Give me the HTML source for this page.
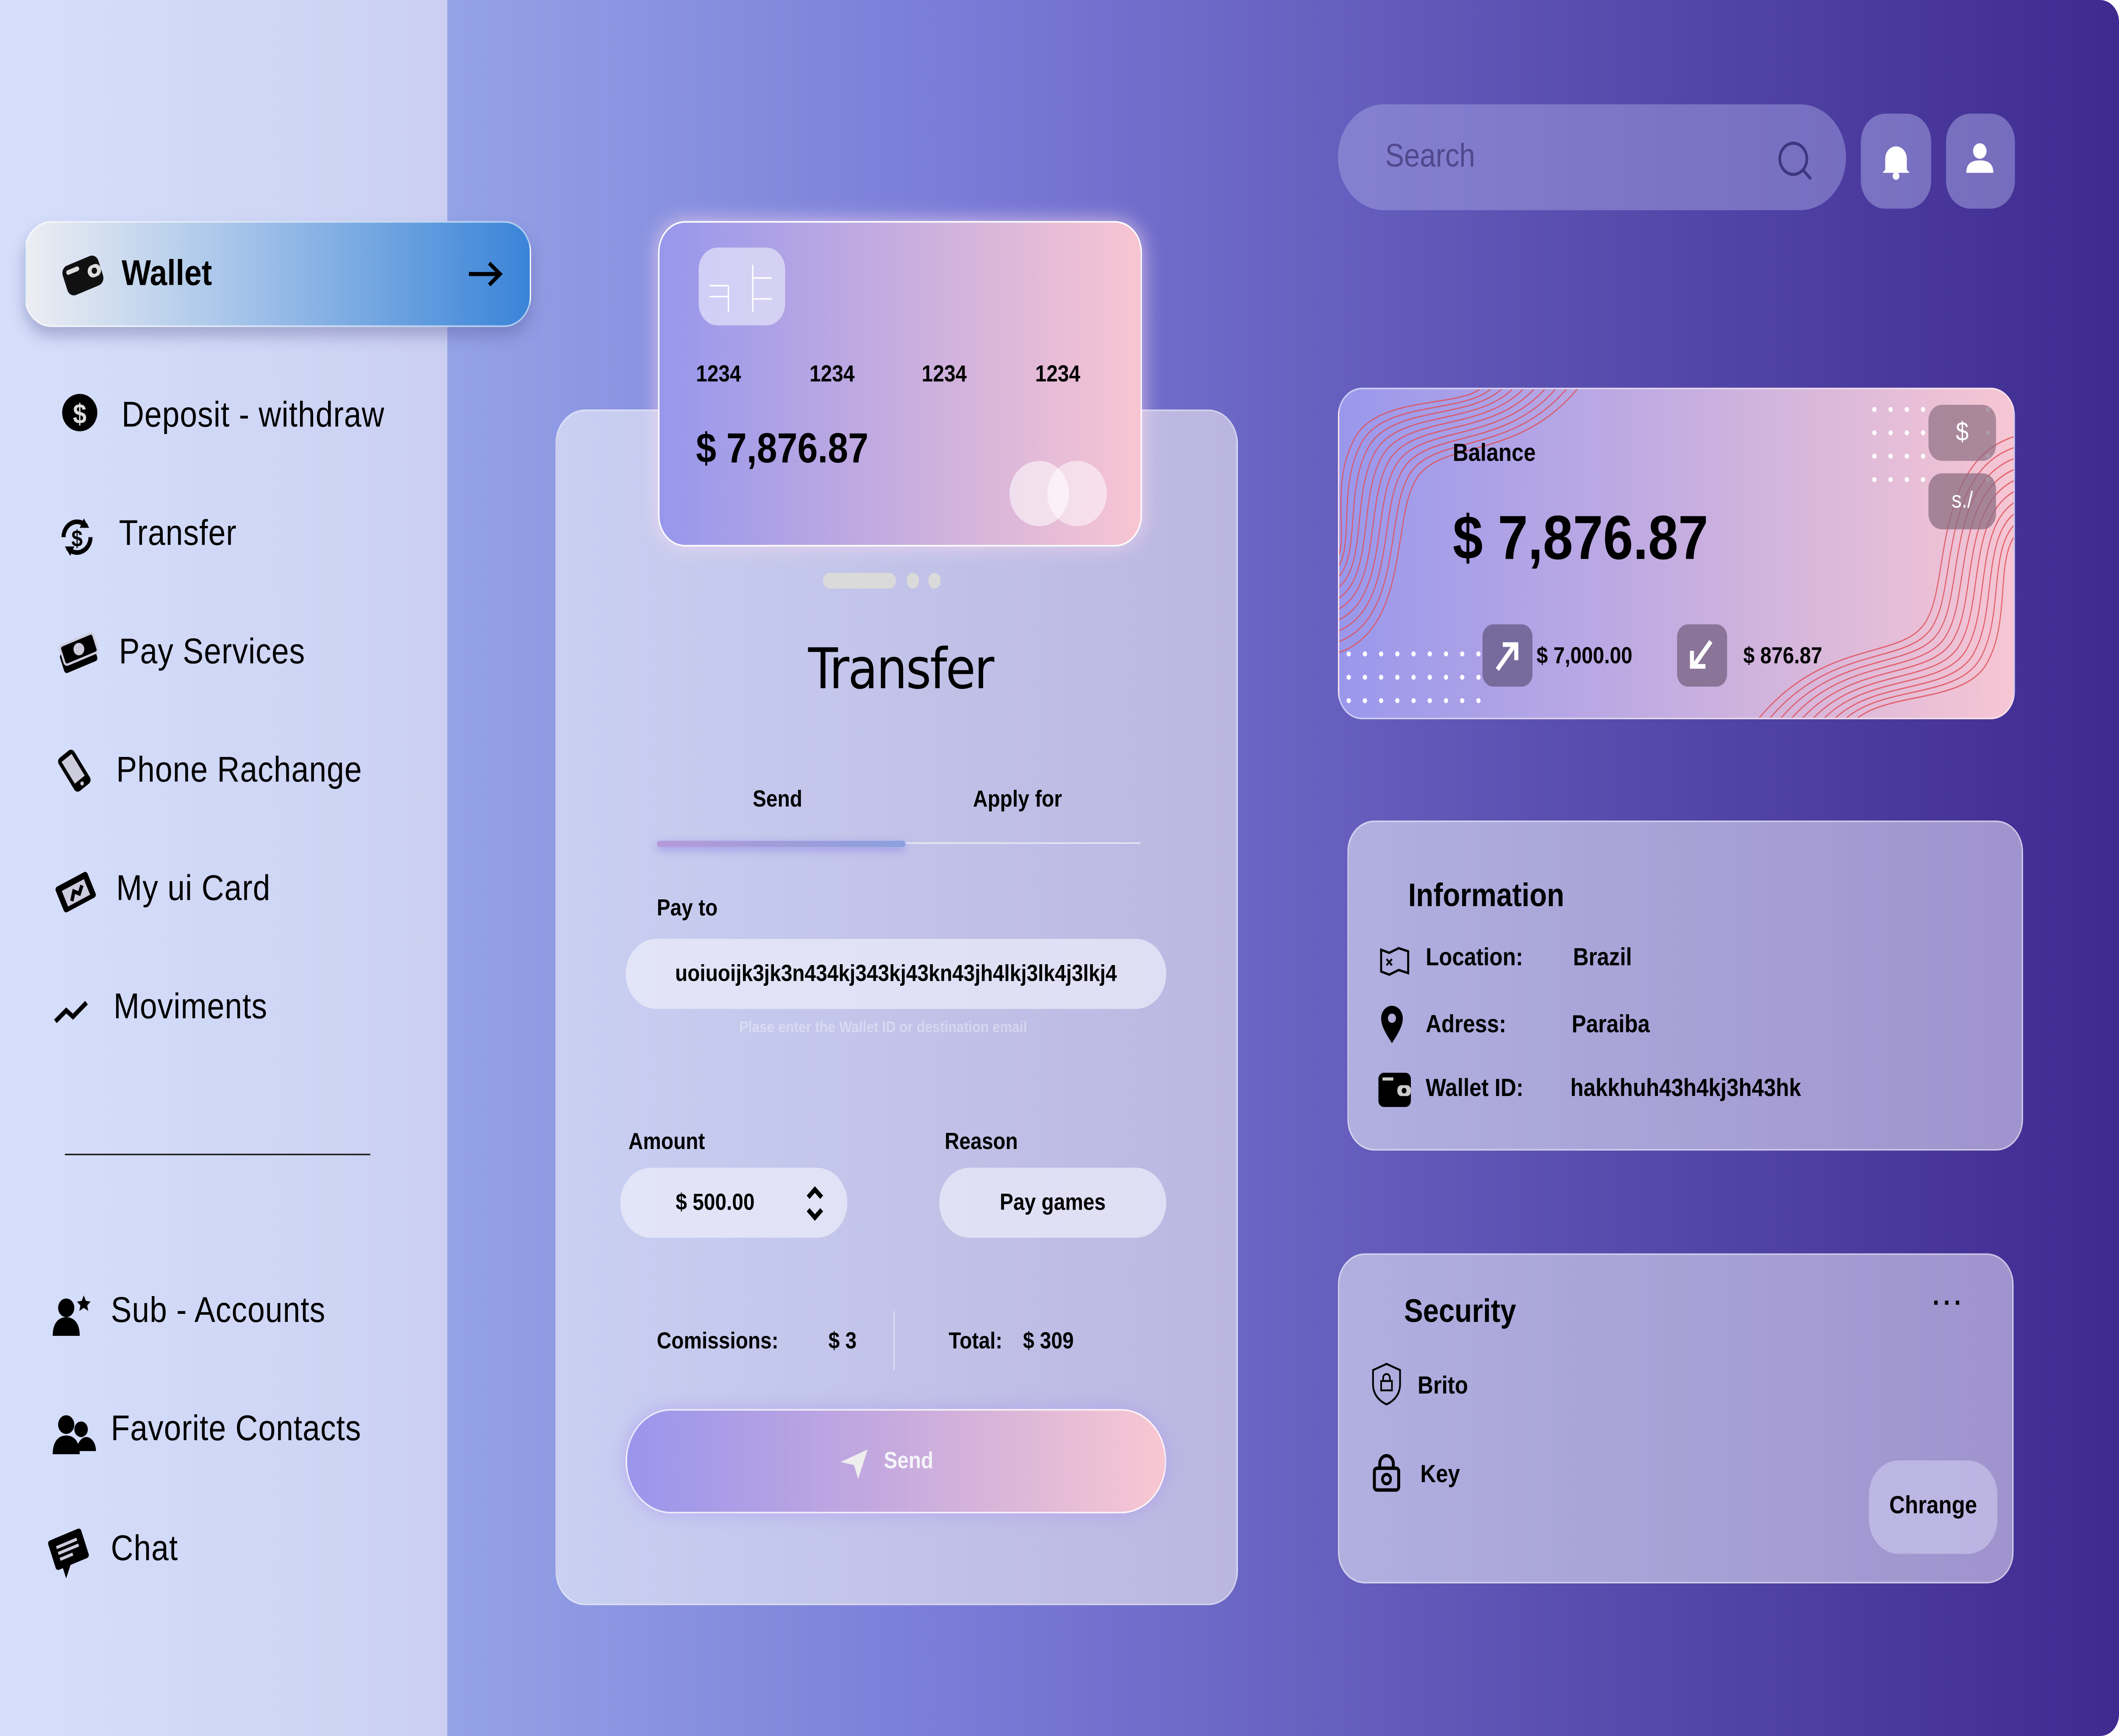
<!DOCTYPE html>
<html><head><meta charset="utf-8"><style>
*{margin:0;padding:0;box-sizing:border-box}
html,body{width:100%;height:100%;overflow:hidden;background:#fff}
#wrap{position:fixed;left:0;top:0;width:100vw;height:100vh;display:block}
#s{position:relative;width:1568px;height:1115px;font-family:"Liberation Sans",sans-serif;color:#000;overflow:hidden;border-radius:0 14px 14px 0}
.a{position:absolute}
#main{left:0;top:0;width:1568px;height:1115px;background:linear-gradient(90deg,#94a2e6 331px,#7a7cd8 700px,#5a4fb0 1150px,#3f2a90 1568px)}
#side{left:0;top:0;width:331px;height:1115px;background:linear-gradient(90deg,#d5dffb,#cbd0f2)}
.nav{position:absolute;font-size:23px;display:flex;align-items:center;letter-spacing:.3px}
.pill{position:absolute;border-radius:24px;background:rgba(235,235,250,.75);font-size:15px;display:flex;align-items:center;justify-content:center;font-weight:bold}
</style></head><body>
<svg id="wrap" viewBox="0 0 1568 1115" preserveAspectRatio="none"><foreignObject x="0" y="0" width="1568" height="1115"><div xmlns="http://www.w3.org/1999/xhtml" id="s">
<div id="main" class="a"></div>
<div id="side" class="a"></div>

<div class="a" style="left:18px;top:142px;width:375px;height:68px;border-radius:20px;background:linear-gradient(90deg,#eceef3,#a9c6ea 40%,#3a84d8);box-shadow:0 6px 10px rgba(80,80,140,.35);border:1px solid rgba(255,255,255,.6)"></div>
<svg class="a" style="left:44px;top:160px" width="34" height="32" viewBox="0 0 34 32"><g transform="rotate(-20 17 16)"><rect x="3" y="7" width="28" height="20" rx="5" fill="#111"/><rect x="6" y="10" width="10" height="3" rx="1.5" fill="#ddd"/><rect x="21" y="13" width="10" height="8" rx="4" fill="#ddd"/><circle cx="26" cy="17" r="2" fill="#111"/></g></svg>
<div class="a" style="left:90px;top:162px;font-size:23px;font-weight:bold">Wallet</div>
<svg class="a" style="left:345px;top:166px" width="28" height="20" viewBox="0 0 28 20"><path d="M2 10H25M17 3l8 7-8 7" stroke="#000" stroke-width="2.6" fill="none"/></svg>

<svg class="a" style="left:45px;top:252px" width="28" height="26" viewBox="0 0 28 26"><ellipse cx="14" cy="13" rx="13" ry="12" fill="#000"/><text x="14" y="20" font-size="18" font-weight="bold" fill="#ddd" text-anchor="middle" font-family="Liberation Sans">$</text></svg>
<div class="nav" style="left:90px;top:253px">Deposit - withdraw</div>
<svg class="a" style="left:42px;top:330px" width="30" height="30" viewBox="0 0 30 30"><path d="M5 15a10 10 0 0 1 17-7M25 15a10 10 0 0 1-17 7" stroke="#000" stroke-width="3" fill="none"/><path d="M20 3l4 6-7 0z M10 27l-4-6 7 0z" fill="#000"/><text x="15" y="21" font-size="15" font-weight="bold" text-anchor="middle" font-family="Liberation Sans">$</text></svg>
<div class="nav" style="left:88px;top:329px">Transfer</div>
<svg class="a" style="left:41px;top:404px" width="32" height="30" viewBox="0 0 32 30"><g transform="rotate(-20 16 15)"><rect x="3" y="12" width="26" height="13" rx="2" fill="#000"/><rect x="5" y="7" width="26" height="13" rx="2" fill="#000" stroke="#ccd" stroke-width="1.5"/><circle cx="18" cy="13.5" r="4" fill="#ccd"/></g></svg>
<div class="nav" style="left:88px;top:405px">Pay Services</div>
<svg class="a" style="left:40px;top:480px" width="30" height="30" viewBox="0 0 30 30"><g transform="rotate(-35 15 15)"><rect x="8" y="2" width="14" height="26" rx="3" fill="#000"/><rect x="10.5" y="5" width="9" height="17" fill="#ccd"/><circle cx="15" cy="25" r="1.3" fill="#ccd"/></g></svg>
<div class="nav" style="left:86px;top:481px">Phone Rachange</div>
<svg class="a" style="left:40px;top:558px" width="32" height="30" viewBox="0 0 32 30"><g transform="rotate(-25 16 15)"><rect x="3" y="6" width="26" height="18" rx="2" fill="#000"/><rect x="7" y="10" width="18" height="11" fill="#ccd"/><path d="M11 19l4-5 3 3 4-4" stroke="#000" stroke-width="2.5" fill="none"/></g></svg>
<div class="nav" style="left:86px;top:557px">My ui Card</div>
<svg class="a" style="left:40px;top:638px" width="26" height="22" viewBox="0 0 26 22"><path d="M1 18l8-7 5 4 10-9" stroke="#000" stroke-width="3" fill="none"/></svg>
<div class="nav" style="left:84px;top:633px">Moviments</div>
<div class="a" style="left:48px;top:741px;width:226px;height:1px;background:#222"></div>
<svg class="a" style="left:38px;top:830px" width="32" height="30" viewBox="0 0 32 30"><circle cx="11" cy="10" r="6" fill="#000"/><path d="M1 28c0-9 5-12 10-12s10 3 10 12z" fill="#000"/><path d="M24 2l1.5 3.5 3.5.5-2.5 2.5.8 3.5-3.3-2-3.3 2 .8-3.5-2.5-2.5 3.5-.5z" fill="#000"/></svg>
<div class="nav" style="left:82px;top:828px">Sub - Accounts</div>
<svg class="a" style="left:38px;top:906px" width="34" height="30" viewBox="0 0 34 30"><circle cx="11" cy="9" r="6" fill="#000"/><path d="M1 28c0-9 5-12 10-12s10 3 10 12z" fill="#000"/><circle cx="22" cy="12" r="5" fill="#000"/><path d="M18 26c2-7 5-9 8-9s7 3 7 9z" fill="#000"/></svg>
<div class="nav" style="left:82px;top:904px">Favorite Contacts</div>
<svg class="a" style="left:35px;top:980px" width="32" height="34" viewBox="0 0 32 34"><g transform="rotate(-20 16 16)"><rect x="3" y="5" width="26" height="20" rx="2" fill="#000"/><path d="M8 24v8l6-7z" fill="#000"/><path d="M8 11h16M8 15h16M8 19h10" stroke="#ccd" stroke-width="2"/></g></svg>
<div class="nav" style="left:82px;top:981px">Chat</div>

<div class="a" style="left:411px;top:263px;width:505px;height:768px;border-radius:22px;background:linear-gradient(90deg,#c9d0f2,#bbb6e0);border:1px solid rgba(255,255,255,.35)"></div>
<div class="a" style="left:487px;top:142px;width:358px;height:209px;border-radius:20px;background:linear-gradient(90deg,#9797ec,#c7addf 50%,#f8c5d2);border:1.5px solid #fff;box-shadow:0 0 14px rgba(255,220,240,.7)"></div>
<div class="a" style="left:517px;top:159px;width:64px;height:50px;border-radius:14px;background:rgba(230,230,250,.7)"></div>
<svg class="a" style="left:517px;top:159px" width="64" height="50" viewBox="0 0 64 50"><path d="M8 24.5h14M8 31.5h14M22 24.5v17M40 11v30.5M40 19.5h14M40 33h14" stroke="#fff" stroke-width="1" fill="none"/></svg>
<div class="a" style="left:515px;top:232px;font-size:15px;font-weight:bold">1234</div>
<div class="a" style="left:599px;top:232px;font-size:15px;font-weight:bold">1234</div>
<div class="a" style="left:682px;top:232px;font-size:15px;font-weight:bold">1234</div>
<div class="a" style="left:766px;top:232px;font-size:15px;font-weight:bold">1234</div>
<div class="a" style="left:515px;top:273px;font-size:27px;font-weight:bold">$ 7,876.87</div>
<div class="a" style="left:747px;top:296px;width:44px;height:42px;border-radius:50%;background:rgba(255,255,255,.55)"></div>
<div class="a" style="left:775px;top:296px;width:44px;height:42px;border-radius:50%;background:rgba(255,255,255,.5)"></div>
<div class="a" style="left:609px;top:368px;width:54px;height:10px;border-radius:5px;background:#dadada"></div>
<div class="a" style="left:671px;top:368px;width:9px;height:10px;border-radius:5px;background:#dadada"></div>
<div class="a" style="left:687px;top:368px;width:9px;height:10px;border-radius:5px;background:#dadada"></div>
<div class="a" style="left:598px;top:410px;font-size:36px;font-family:'DejaVu Sans',sans-serif;letter-spacing:-1px">Transfer</div>
<div class="a" style="left:557px;top:505px;font-size:15px;font-weight:bold">Send</div>
<div class="a" style="left:720px;top:505px;font-size:15px;font-weight:bold">Apply for</div>
<div class="a" style="left:670px;top:541px;width:174px;height:1px;background:rgba(255,255,255,.6)"></div>
<div class="a" style="left:486px;top:540px;width:184px;height:4px;border-radius:2px;background:linear-gradient(90deg,#b59ad8,#8aa0dc);box-shadow:0 2px 6px rgba(130,120,230,.6)"></div>
<div class="a" style="left:486px;top:575px;font-size:15px;font-weight:bold">Pay to</div>
<div class="pill" style="left:463px;top:603px;width:400px;height:45px">uoiuoijk3jk3n434kj343kj43kn43jh4lkj3lk4j3lkj4</div>
<div class="a" style="left:547px;top:655px;font-size:10px;color:rgba(255,255,255,.35);font-weight:bold">Plase enter the Wallet ID or  destination email</div>
<div class="a" style="left:465px;top:725px;font-size:15px;font-weight:bold">Amount</div>
<div class="a" style="left:699px;top:725px;font-size:15px;font-weight:bold">Reason</div>
<div class="pill" style="left:459px;top:750px;width:168px;height:45px;justify-content:flex-start;padding-left:41px">$ 500.00</div>
<svg class="a" style="left:596px;top:761px" width="14" height="24"><path d="M2 8l5-5 5 5M2 16l5 5 5-5" stroke="#000" stroke-width="3" fill="none"/></svg>
<div class="pill" style="left:695px;top:750px;width:168px;height:45px">Pay games</div>
<div class="a" style="left:486px;top:853px;font-size:15px;font-weight:bold">Comissions:</div>
<div class="a" style="left:613px;top:853px;font-size:15px;font-weight:bold">$ 3</div>
<div class="a" style="left:661px;top:842px;width:1px;height:38px;background:rgba(255,255,255,.4)"></div>
<div class="a" style="left:702px;top:853px;font-size:15px;font-weight:bold">Total:</div>
<div class="a" style="left:757px;top:853px;font-size:15px;font-weight:bold">$ 309</div>
<div class="a" style="left:463px;top:905px;width:400px;height:67px;border-radius:34px;background:linear-gradient(90deg,#9a95ec,#c7aade 50%,#f8c7d2);border:1.5px solid rgba(255,255,255,.8);box-shadow:0 0 12px rgba(170,150,240,.6)"></div>
<svg class="a" style="left:621px;top:929px" width="22" height="22" viewBox="0 0 22 22"><path d="M1 10L21 2 14 21 11 12z" fill="#eee"/></svg>
<div class="a" style="left:654px;top:930px;font-size:15px;font-weight:bold;color:#f4f4fa">Send</div>

<div class="a" style="left:990px;top:67px;width:376px;height:68px;border-radius:34px;background:rgba(170,170,230,.45)"></div>
<div class="a" style="left:1025px;top:89px;font-size:21px;color:rgba(40,30,90,.55)">Search</div>
<svg class="a" style="left:1314px;top:89px" width="30" height="30"><circle cx="13" cy="13" r="10" stroke="#3c3780" stroke-width="2" fill="none"/><path d="M20 20l6 6" stroke="#3c3780" stroke-width="2"/></svg>
<div class="a" style="left:1377px;top:73px;width:52px;height:61px;border-radius:18px;background:rgba(170,170,230,.5)"></div>
<svg class="a" style="left:1391px;top:90px" width="24" height="26" viewBox="0 0 24 26"><path d="M4 19V12a8 8 0 0 1 16 0v7l2 2H2z" fill="#fff"/><circle cx="12" cy="23" r="2.5" fill="#fff"/></svg>
<div class="a" style="left:1440px;top:73px;width:51px;height:61px;border-radius:18px;background:rgba(170,170,230,.5)"></div>
<svg class="a" style="left:1452px;top:89px" width="26" height="26"><circle cx="13" cy="8" r="5" fill="#fff"/><path d="M3 22c0-6 4-8 10-8s10 2 10 8z" fill="#fff"/></svg>

<div class="a" style="left:990px;top:249px;width:501px;height:213px;border-radius:18px;overflow:hidden;background:linear-gradient(90deg,#9a98ec,#c0abe2 45%,#f6c6d3);border:1px solid rgba(255,255,255,.5)">
<svg width="501" height="213" style="position:absolute;left:0;top:0" fill="none" stroke="#e0505a" stroke-width=".8" opacity=".85">
<g><path d="M0 155C40 140 30 80 45 55 60 25 120 40 160 0"/><path d="M0 148C35 133 25 78 40 52 55 22 115 36 152 0"/><path d="M0 141C30 126 20 75 35 49 50 19 110 32 144 0"/><path d="M0 134C25 119 15 72 30 46 45 16 105 28 136 0"/><path d="M0 127C20 112 10 69 25 43 40 13 100 24 128 0"/><path d="M0 120C15 105 5 66 20 40 35 10 95 20 120 0"/><path d="M0 113C10 98 0 63 15 37 30 7 90 16 112 0"/><path d="M0 106C5 91 -5 60 10 34 25 4 85 12 104 0"/><path d="M0 162C45 147 35 83 50 58 65 28 125 44 168 0"/><path d="M0 169C50 154 40 86 55 61 70 31 130 48 176 0"/></g>
<g transform="translate(501 213) rotate(180)"><path d="M0 155C40 140 30 80 45 55 60 25 120 40 160 0"/><path d="M0 148C35 133 25 78 40 52 55 22 115 36 152 0"/><path d="M0 141C30 126 20 75 35 49 50 19 110 32 144 0"/><path d="M0 134C25 119 15 72 30 46 45 16 105 28 136 0"/><path d="M0 127C20 112 10 69 25 43 40 13 100 24 128 0"/><path d="M0 120C15 105 5 66 20 40 35 10 95 20 120 0"/><path d="M0 162C45 147 35 83 50 58 65 28 125 44 168 0"/><path d="M0 169C50 154 40 86 55 61 70 31 130 48 176 0"/><path d="M0 176C55 161 45 89 60 64 75 34 135 52 184 0"/><path d="M0 183C60 168 50 92 65 67 80 37 140 56 192 0"/></g>
</svg>
<svg width="501" height="213" style="position:absolute;left:0;top:0" fill="#fff">
<g><circle cx="396" cy="13" r="1.6"/><circle cx="396" cy="28" r="1.6"/><circle cx="396" cy="43" r="1.6"/><circle cx="396" cy="58" r="1.6"/></g>
<g transform="translate(12 0)"><circle cx="396" cy="13" r="1.6"/><circle cx="396" cy="28" r="1.6"/><circle cx="396" cy="43" r="1.6"/><circle cx="396" cy="58" r="1.6"/></g>
<g transform="translate(24 0)"><circle cx="396" cy="13" r="1.6"/><circle cx="396" cy="28" r="1.6"/><circle cx="396" cy="43" r="1.6"/><circle cx="396" cy="58" r="1.6"/></g>
<g transform="translate(36 0)"><circle cx="396" cy="13" r="1.6"/><circle cx="396" cy="28" r="1.6"/><circle cx="396" cy="43" r="1.6"/><circle cx="396" cy="58" r="1.6"/></g>
<g transform="translate(84 0)"><circle cx="396" cy="13" r="1.6"/><circle cx="396" cy="28" r="1.6"/><circle cx="396" cy="43" r="1.6"/><circle cx="396" cy="58" r="1.6"/></g>
<g transform="translate(-389 157)"><circle cx="396" cy="13" r="1.6"/><circle cx="396" cy="28" r="1.6"/><circle cx="396" cy="43" r="1.6"/></g>
<g transform="translate(-377 157)"><circle cx="396" cy="13" r="1.6"/><circle cx="396" cy="28" r="1.6"/><circle cx="396" cy="43" r="1.6"/></g>
<g transform="translate(-365 157)"><circle cx="396" cy="13" r="1.6"/><circle cx="396" cy="28" r="1.6"/><circle cx="396" cy="43" r="1.6"/></g>
<g transform="translate(-353 157)"><circle cx="396" cy="13" r="1.6"/><circle cx="396" cy="28" r="1.6"/><circle cx="396" cy="43" r="1.6"/></g>
<g transform="translate(-341 157)"><circle cx="396" cy="13" r="1.6"/><circle cx="396" cy="28" r="1.6"/><circle cx="396" cy="43" r="1.6"/></g>
<g transform="translate(-329 157)"><circle cx="396" cy="13" r="1.6"/><circle cx="396" cy="28" r="1.6"/><circle cx="396" cy="43" r="1.6"/></g>
<g transform="translate(-317 157)"><circle cx="396" cy="13" r="1.6"/><circle cx="396" cy="28" r="1.6"/><circle cx="396" cy="43" r="1.6"/></g>
<g transform="translate(-305 157)"><circle cx="396" cy="13" r="1.6"/><circle cx="396" cy="28" r="1.6"/><circle cx="396" cy="43" r="1.6"/></g>
<g transform="translate(-293 157)"><circle cx="396" cy="13" r="1.6"/><circle cx="396" cy="28" r="1.6"/><circle cx="396" cy="43" r="1.6"/></g>
</svg>
<div class="a" style="left:84px;top:33px;font-size:16px;font-weight:bold">Balance</div>
<div class="a" style="left:84px;top:74px;font-size:40px;font-weight:bold">$ 7,876.87</div>
<div class="a" style="left:436px;top:10px;width:50px;height:36px;border-radius:10px;background:rgba(140,110,130,.7);color:#fff;font-size:17px;text-align:center;line-height:36px">$</div>
<div class="a" style="left:436px;top:54px;width:50px;height:36px;border-radius:10px;background:rgba(140,110,130,.75);color:#fff;font-size:15px;text-align:center;line-height:36px">s./</div>
<div class="a" style="left:106px;top:151px;width:37px;height:40px;border-radius:8px;background:#776b9d"></div>
<svg class="a" style="left:112px;top:158px" width="24" height="26"><path d="M5 22L18 6M9 6h10v10" stroke="#fff" stroke-width="3" fill="none"/></svg>
<div class="a" style="left:146px;top:163px;font-size:15px;font-weight:bold">$ 7,000.00</div>
<div class="a" style="left:250px;top:151px;width:37px;height:40px;border-radius:8px;background:#8a7498"></div>
<svg class="a" style="left:256px;top:158px" width="24" height="26"><path d="M19 4L6 20M5 10v10h10" stroke="#fff" stroke-width="3" fill="none"/></svg>
<div class="a" style="left:299px;top:163px;font-size:15px;font-weight:bold">$ 876.87</div>
</div>

<div class="a" style="left:997px;top:527px;width:500px;height:212px;border-radius:20px;background:linear-gradient(90deg,rgba(190,190,230,.85),rgba(175,165,215,.85));border:1px solid rgba(255,255,255,.45)"></div>
<div class="a" style="left:1042px;top:564px;font-size:21px;font-weight:bold">Information</div>
<svg class="a" style="left:1021px;top:607px" width="22" height="20"><path d="M1 3l6 2 7-3 7 2v14l-7-2-7 3-6-2z" fill="none" stroke="#000" stroke-width="1.5"/><path d="M5 9l4 4M9 9l-4 4" stroke="#000" stroke-width="1.3"/></svg>
<div class="a" style="left:1055px;top:607px;font-size:16px;font-weight:bold">Location:</div>
<div class="a" style="left:1164px;top:607px;font-size:16px;font-weight:bold">Brazil</div>
<svg class="a" style="left:1020px;top:645px" width="20" height="26"><path d="M10 25C4 17 2 13 2 9a8 8 0 0 1 16 0c0 4-2 8-8 16z" fill="#000"/><circle cx="10" cy="9" r="3" fill="#b3aed9"/></svg>
<div class="a" style="left:1055px;top:650px;font-size:16px;font-weight:bold">Adress:</div>
<div class="a" style="left:1163px;top:650px;font-size:16px;font-weight:bold">Paraiba</div>
<svg class="a" style="left:1019px;top:687px" width="26" height="26"><rect x="1" y="2" width="24" height="22" rx="4" fill="#000"/><rect x="4" y="5" width="8" height="2" fill="#ccc"/><rect x="15" y="10" width="10" height="7" rx="3" fill="#ccc"/><circle cx="20" cy="13.5" r="1.8" fill="#000"/></svg>
<div class="a" style="left:1055px;top:691px;font-size:16px;font-weight:bold">Wallet ID:</div>
<div class="a" style="left:1162px;top:691px;font-size:16px;font-weight:bold">hakkhuh43h4kj3h43hk</div>

<div class="a" style="left:990px;top:805px;width:500px;height:212px;border-radius:20px;background:linear-gradient(90deg,rgba(190,190,230,.85),rgba(175,165,215,.85));border:1px solid rgba(255,255,255,.45)"></div>
<div class="a" style="left:1039px;top:831px;font-size:21px;font-weight:bold">Security</div>
<div class="a" style="left:1430px;top:822px;font-size:18px;font-weight:bold;letter-spacing:3px">...</div>
<svg class="a" style="left:1013px;top:874px" width="26" height="30"><path d="M13 2l10 4v9c0 7-5 11-10 13C8 26 3 22 3 15V6z" fill="none" stroke="#000" stroke-width="1.3"/><rect x="9" y="13" width="8" height="6" fill="none" stroke="#000" stroke-width="1.2"/><path d="M10.5 13v-2a2.5 2.5 0 0 1 5 0v2" stroke="#000" stroke-width="1.2" fill="none"/></svg>
<div class="a" style="left:1049px;top:882px;font-size:16px;font-weight:bold">Brito</div>
<svg class="a" style="left:1014px;top:933px" width="24" height="26"><rect x="3" y="10" width="18" height="14" rx="2" fill="none" stroke="#000" stroke-width="2.2"/><path d="M7 10V7a5 5 0 0 1 10 0v3" stroke="#000" stroke-width="2.2" fill="none"/><circle cx="12" cy="17" r="3" fill="none" stroke="#000" stroke-width="2"/></svg>
<div class="a" style="left:1051px;top:939px;font-size:16px;font-weight:bold">Key</div>
<div class="a" style="left:1383px;top:938px;width:95px;height:60px;border-radius:22px;background:rgba(200,195,235,.7);font-size:16px;font-weight:bold;text-align:center;line-height:60px">Chrange</div>
</div></foreignObject></svg>
</body></html>
